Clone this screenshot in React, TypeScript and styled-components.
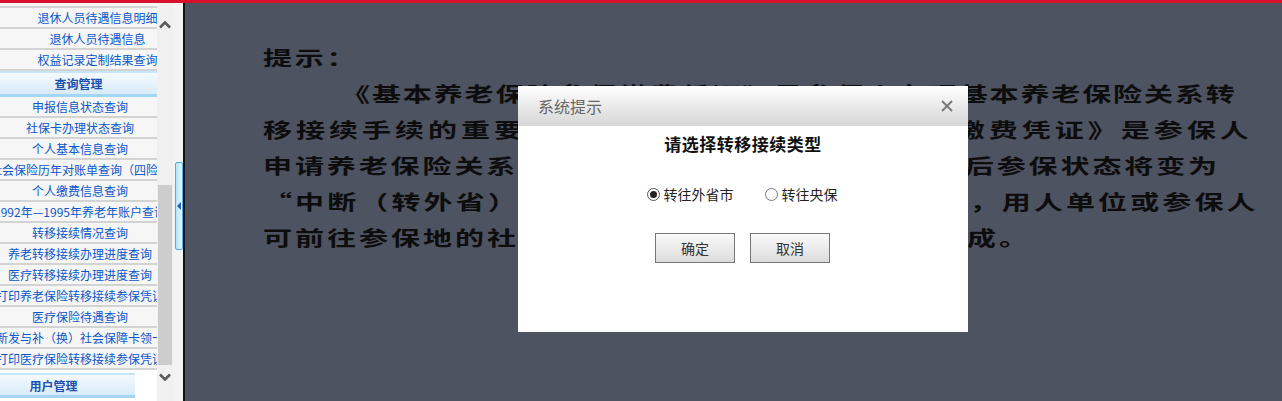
import React from "react";
import styled, { createGlobalStyle } from "styled-components";

const Global = createGlobalStyle`
  *, *::before, *::after { box-sizing: border-box; }
  html, body { margin: 0; padding: 0; width: 1282px; height: 401px; overflow: hidden; background: #4d5361; }
  body { font-family: "Noto Sans CJK SC", "Noto Sans", sans-serif; }
`;

const Page = styled.div`
  position: relative;
  width: 1282px;
  height: 401px;
  display: flex;
  flex-direction: column;
  overflow: hidden;
`;

const TopBar = styled.div`
  height: 3px;
  flex: none;
  background: #d8102c;
`;

const Body = styled.div`
  flex: 1;
  display: flex;
  min-height: 0;
`;

const Sidebar = styled.nav`
  width: 157px;
  flex: none;
  overflow: hidden;
  background: #fff;
`;

const MenuList = styled.div<{ $offset: number }>`
  display: flex;
  flex-direction: column;
  margin-top: ${(p) => p.$offset}px;
`;

const Row = styled.div<{ $pad: number }>`
  height: 21px;
  flex: none;
  border-bottom: 2px solid #d3d3d3;
  background: #f6f6f6;
  display: flex;
  justify-content: center;
  align-items: center;
  overflow: hidden;
  white-space: nowrap;
  padding-left: ${(p) => p.$pad}px;
  font-size: 12px;
  line-height: 19px;
  color: #0a58ca;
`;

const GroupHeader = styled.div<{ $width?: number; $padRight?: number; $gap?: number }>`
  height: ${(p) => (p.$width ? 25 : 26)}px;
  width: ${(p) => (p.$width ? `${p.$width}px` : "auto")};
  flex: none;
  margin-top: ${(p) => p.$gap ?? 0}px;
  border-top: 2px solid #c4e6f8;
  border-bottom: 3px solid #a3d6f4;
  background: linear-gradient(#f4faff, #d8ebf8);
  display: flex;
  align-items: center;
  justify-content: center;
  padding-right: ${(p) => p.$padRight ?? 0}px;
  font-size: 12px;
  font-weight: 700;
  color: #1a4fb0;
  white-space: nowrap;
`;

const ScrollBar = styled.div`
  width: 16px;
  flex: none;
  background: #f0f0f0;
  display: flex;
  flex-direction: column;
  align-items: center;
`;

const ScrollArrow = styled.div<{ $h: number }>`
  height: ${(p) => p.$h}px;
  width: 100%;
  flex: none;
  display: flex;
  align-items: center;
  justify-content: center;
`;

const Thumb = styled.div<{ $top: number; $h: number }>`
  margin-top: ${(p) => p.$top}px;
  height: ${(p) => p.$h}px;
  width: 14px;
  flex: none;
  background: #cdcdcd;
`;

const ToggleStrip = styled.div`
  width: 12px;
  flex: none;
  background: #f3f3f3;
  border-right: 2px solid #111;
  padding: 159px 0 0 2px;
`;

const ToggleButton = styled.div`
  width: 8px;
  height: 88px;
  border: 1px solid #4faee8;
  border-radius: 2px;
  background: linear-gradient(90deg, #b4e4fb, #e6f7ff);
  display: flex;
  align-items: center;
  justify-content: center;
`;

const LeftTriangle = styled.span`
  width: 0;
  height: 0;
  border-top: 4px solid transparent;
  border-bottom: 4px solid transparent;
  border-right: 4px solid #2a5ea8;
  margin-left: -1px;
`;

const Main = styled.main`
  flex: 1;
  background: #4d5361;
  overflow: hidden;
  padding: 37px 0 0 78px;
  color: #0d0d0d;
`;

const Line = styled.div<{ $ls: number; $indent?: number }>`
  height: 36px;
  line-height: 36px;
  white-space: nowrap;
  font-size: 20px;
  font-weight: 700;
  letter-spacing: ${(p) => p.$ls}px;
  margin-left: ${(p) => p.$indent ?? 0}px;
  width: max-content;
  text-spacing-trim: space-all;
  transform: scaleX(1.45);
  transform-origin: left center;
`;

const Dialog = styled.div`
  position: absolute;
  left: 518px;
  top: 86px;
  width: 450px;
  height: 246px;
  background: #fff;
  display: flex;
  flex-direction: column;
`;

const DialogHeader = styled.div`
  height: 40px;
  flex: none;
  background: linear-gradient(#ffffff, #d6d6d6);
  display: flex;
  align-items: center;
  justify-content: space-between;
  padding: 0 15px 0 20px;
`;

const DialogTitle = styled.span`
  font-size: 16px;
  color: #666;
`;

const CloseIcon = styled.svg`
  width: 12px;
  height: 12px;
  display: block;
`;

const DialogBody = styled.div`
  display: flex;
  flex-direction: column;
  align-items: center;
`;

const Prompt = styled.div`
  margin-top: 8px;
  height: 20px;
  line-height: 20px;
  font-size: 17px;
  font-weight: 700;
  color: #111;
  letter-spacing: 0.5px;
`;

const RadioGroup = styled.div`
  margin-top: 30px;
  height: 20px;
  display: flex;
  align-items: center;
  gap: 31px;
  padding-right: 2px;
`;

const RadioOption = styled.label`
  display: flex;
  align-items: center;
  gap: 4px;
  font-size: 14px;
  color: #222;
  cursor: pointer;
`;

const RadioCircle = styled.span<{ $checked: boolean }>`
  width: 13px;
  height: 13px;
  border-radius: 50%;
  border: 1px solid ${(p) => (p.$checked ? "#555" : "#7a7a7a")};
  background: #fff;
  display: flex;
  align-items: center;
  justify-content: center;
  &::after {
    content: "";
    width: 7px;
    height: 7px;
    border-radius: 50%;
    background: ${(p) => (p.$checked ? "#222" : "transparent")};
  }
`;

const ButtonRow = styled.div`
  margin-top: 29px;
  display: flex;
  gap: 15px;
  padding-right: 1px;
`;

const Button = styled.button`
  width: 80px;
  height: 30px;
  border: 1px solid #777;
  background: linear-gradient(#fafafa, #dcdcdc);
  font-family: "Noto Sans CJK SC", "Noto Sans", sans-serif;
  font-size: 14px;
  color: #333;
  padding: 0;
  cursor: pointer;
`;

const Chevron = ({ down }: { down?: boolean }) => (
  <svg width="12" height="8" viewBox="0 0 12 8">
    <polyline
      points={down ? "1,1.5 6,6.5 11,1.5" : "1,6.5 6,1.5 11,6.5"}
      fill="none"
      stroke="#5a5a5a"
      strokeWidth="2.6"
    />
  </svg>
);

const topRows = ["退休人员养老金发放查询", "退休人员待遇信息明细", "退休人员待遇信息", "权益记录定制结果查询"];
const queryRows = [
  "申报信息状态查询",
  "社保卡办理状态查询",
  "个人基本信息查询",
  "社会保险历年对账单查询（四险）",
  "个人缴费信息查询",
  "1992年—1995年养老年账户查询",
  "转移接续情况查询",
  "养老转移接续办理进度查询",
  "医疗转移接续办理进度查询",
  "打印养老保险转移接续参保凭证",
  "医疗保险待遇查询",
  "新发与补（换）社会保障卡领卡",
  "打印医疗保险转移接续参保凭证",
];

const lines: { text: string; ls: number; indent?: number }[] = [
  { text: "提示：", ls: 1.9 },
  { text: "《基本养老保险参保缴费凭证》是参保人办理基本养老保险关系转", ls: 1.3, indent: 78 },
  { text: "移接续手续的重要凭证。而《基本养老保险参保缴费凭证》是参保人", ls: 2.75 },
  { text: "申请养老保险关系转移接续的凭证，办理转出手续后参保状态将变为", ls: 2.0 },
  { text: "“中断（转外省）状态，参保人员办理转移接续后，用人单位或参保人", ls: 2.15 },
  { text: "可前往参保地的社会保险经办机构办理转出手续完成。", ls: 2.07 },
];

export default function App() {
  const [choice, setChoice] = React.useState<"province" | "central">("province");
  return (
    <Page>
      <Global />
      <TopBar />
      <Body>
        <Sidebar>
          <MenuList $offset={-16}>
            {topRows.map((t) => (
              <Row key={t} $pad={38}>
                {t}
              </Row>
            ))}
            <GroupHeader>查询管理</GroupHeader>
            {queryRows.map((t) => (
              <Row key={t} $pad={3}>
                {t}
              </Row>
            ))}
            <GroupHeader $width={135} $padRight={28} $gap={3}>
              用户管理
            </GroupHeader>
          </MenuList>
        </Sidebar>
        <ScrollBar>
          <ScrollArrow $h={44}>
            <Chevron />
          </ScrollArrow>
          <Thumb $top={138} $h={180} />
          <ScrollArrow $h={24}>
            <Chevron down />
          </ScrollArrow>
        </ScrollBar>
        <ToggleStrip>
          <ToggleButton>
            <LeftTriangle />
          </ToggleButton>
        </ToggleStrip>
        <Main>
          {lines.map((l, i) => (
            <Line key={i} $ls={l.ls} $indent={l.indent}>
              {l.text}
            </Line>
          ))}
        </Main>
      </Body>
      <Dialog>
        <DialogHeader>
          <DialogTitle>系统提示</DialogTitle>
          <CloseIcon viewBox="0 0 12 12">
            <path d="M1 1 L11 11 M11 1 L1 11" stroke="#7a7a7a" strokeWidth="2" />
          </CloseIcon>
        </DialogHeader>
        <DialogBody>
          <Prompt>请选择转移接续类型</Prompt>
          <RadioGroup>
            <RadioOption onClick={() => setChoice("province")}>
              <RadioCircle $checked={choice === "province"} />
              转往外省市
            </RadioOption>
            <RadioOption onClick={() => setChoice("central")}>
              <RadioCircle $checked={choice === "central"} />
              转往央保
            </RadioOption>
          </RadioGroup>
          <ButtonRow>
            <Button>确定</Button>
            <Button>取消</Button>
          </ButtonRow>
        </DialogBody>
      </Dialog>
    </Page>
  );
}
